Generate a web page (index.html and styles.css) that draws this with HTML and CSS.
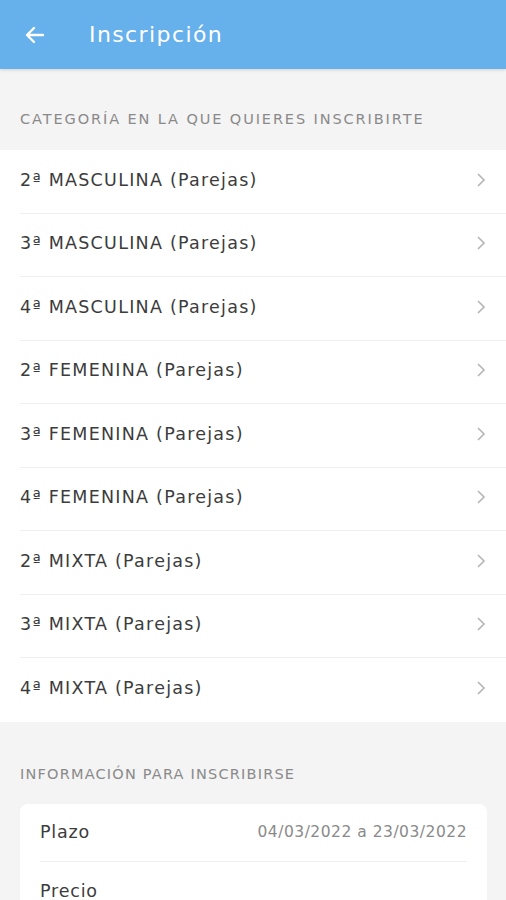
FILE: index.html
```html
<!DOCTYPE html>
<html lang="es">
<head>
  <meta charset="UTF-8">
  <meta name="viewport" content="width=device-width, initial-scale=1.0">
  <title>Inscripción</title>
  <link rel="stylesheet" href="styles.css">
</head>
<body>
  <header class="topbar">
    <button class="back" aria-label="Volver">
      <svg viewBox="0 0 24 24"><path d="M20 12H5M11 5l-7 7 7 7"/></svg>
    </button>
    <h1>Inscripción</h1>
  </header>

  <div class="section-title">Categoría en la que quieres inscribirte</div>
  <ul class="list">
    <li><span>2ª MASCULINA (Parejas)</span><svg viewBox="0 0 10 16"><path d="M2 2l6 6-6 6"/></svg></li>
    <li><span>3ª MASCULINA (Parejas)</span><svg viewBox="0 0 10 16"><path d="M2 2l6 6-6 6"/></svg></li>
    <li><span>4ª MASCULINA (Parejas)</span><svg viewBox="0 0 10 16"><path d="M2 2l6 6-6 6"/></svg></li>
    <li><span>2ª FEMENINA (Parejas)</span><svg viewBox="0 0 10 16"><path d="M2 2l6 6-6 6"/></svg></li>
    <li><span>3ª FEMENINA (Parejas)</span><svg viewBox="0 0 10 16"><path d="M2 2l6 6-6 6"/></svg></li>
    <li><span>4ª FEMENINA (Parejas)</span><svg viewBox="0 0 10 16"><path d="M2 2l6 6-6 6"/></svg></li>
    <li><span>2ª MIXTA (Parejas)</span><svg viewBox="0 0 10 16"><path d="M2 2l6 6-6 6"/></svg></li>
    <li><span>3ª MIXTA (Parejas)</span><svg viewBox="0 0 10 16"><path d="M2 2l6 6-6 6"/></svg></li>
    <li><span>4ª MIXTA (Parejas)</span><svg viewBox="0 0 10 16"><path d="M2 2l6 6-6 6"/></svg></li>
  </ul>

  <div class="section-title info">Información para inscribirse</div>
  <div class="card">
    <div class="row"><span>Plazo</span><span class="value">04/03/2022 a 23/03/2022</span></div>
    <div class="row"><span>Precio</span><span class="value"></span></div>
  </div>
</body>
</html>
```

FILE: styles.css
```css
body { margin:0; background:#f4f4f4; font-family:"DejaVu Sans", "Open Sans", sans-serif;
       color:#3c3c3c; height:900px; overflow:hidden; }

.topbar { height:69px; background:#66b0ec; display:flex; align-items:center;
          box-shadow:0 1px 3px rgba(0,0,0,0.15); position:relative; z-index:1; }
.back { background:none; border:none; width:40px; height:40px; margin-left:15px;
        padding:8px; cursor:pointer; }
.back svg { width:100%; height:100%; fill:none; stroke:#fff; stroke-width:2.4;
            stroke-linecap:round; stroke-linejoin:round; }
.topbar h1 { margin:0 0 0 34px; color:#fff; font-size:22px; font-weight:400; letter-spacing:1.4px; }

.section-title { text-transform:uppercase; color:#8a8a8a; font-size:14.5px; letter-spacing:1.9px;
                 padding:42px 20px 0; height:39px; box-sizing:content-box; }
.section-title.info { padding-top:44px; height:38px; letter-spacing:1.2px; }

.list { list-style:none; margin:0; padding:0; background:#fff; }
.list li { height:63.5px; margin-left:20px; padding-right:20px; display:flex;
           align-items:center; justify-content:space-between; font-size:17.5px; letter-spacing:1.25px;
           border-bottom:1px solid #efefef; box-sizing:border-box; padding-bottom:3px; }
.list li:last-child { border-bottom:none; }
.list li svg { width:10px; height:16px; fill:none; stroke:#b5b5b5; stroke-width:1.6; }

.card { margin:0 19px 0 20px; background:#fff; border-radius:8px; padding:0 20px; }
.card .row { height:58px; display:flex; align-items:center; justify-content:space-between;
             font-size:17.5px; letter-spacing:0.8px; border-bottom:1px solid #efefef; box-sizing:border-box; }
.card .row:last-child { border-bottom:none; }
.card .value { color:#8a8a8a; font-size:15.5px; letter-spacing:0.5px; }
```
